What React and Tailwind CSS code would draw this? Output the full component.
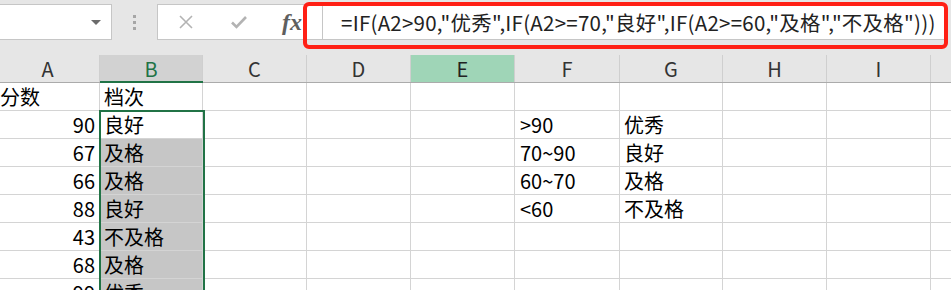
import React from 'react';

const cols = [
  { key: 'A', w: 104 },
  { key: 'B', w: 103 },
  { key: 'C', w: 104 },
  { key: 'D', w: 104 },
  { key: 'E', w: 104 },
  { key: 'F', w: 105 },
  { key: 'G', w: 103 },
  { key: 'H', w: 104 },
  { key: 'I', w: 104 },
  { key: 'J', w: 104 },
];

// row data: A (number, right aligned), B grade, F range, G label
const rows = [
  { a: '分数', aLeft: true, b: '档次' },
  { a: '90', b: '良好', f: '>90', g: '优秀' },
  { a: '67', b: '及格', f: '70~90', g: '良好' },
  { a: '66', b: '及格', f: '60~70', g: '及格' },
  { a: '88', b: '良好', f: '<60', g: '不及格' },
  { a: '43', b: '不及格' },
  { a: '68', b: '及格' },
  { a: '99', b: '优秀' },
];

const font = { fontFamily: '"Noto Sans CJK SC", "Liberation Sans", sans-serif' };

const Cell = ({ w, children, className = '' }) => (
  <div
    className={`h-full shrink-0 border-r border-[#d4d4d4] flex items-end pb-[3px] leading-none overflow-hidden whitespace-nowrap ${className}`}
    style={{ width: w }}
  >
    {children}
  </div>
);

const TopBar = () => (
  <div className="relative h-[55px] bg-[#e6e6e6] flex items-start pt-[4px]">
    {/* name box */}
    <div className="w-[112px] h-[36px] bg-white border border-l-0 border-[#c6c6c6] flex items-center justify-end pr-[10px]">
      <div className="w-0 h-0 border-l-[5px] border-r-[5px] border-t-[5px] border-l-transparent border-r-transparent border-t-[#6b6b6b]" />
    </div>
    {/* dots */}
    <div className="w-[45px] h-[36px] flex flex-col items-center justify-center gap-[3px]">
      <div className="w-[3px] h-[3px] bg-[#a6a6a6]" />
      <div className="w-[3px] h-[3px] bg-[#a6a6a6]" />
      <div className="w-[3px] h-[3px] bg-[#a6a6a6]" />
    </div>
    {/* formula box */}
    <div className="flex-1 mr-[4px] h-[36px] bg-white border border-[#c6c6c6] flex items-center">
      <div className="w-[164px] h-full flex items-center">
        <svg width="16" height="16" viewBox="0 0 16 16" className="ml-[20px]">
          <path d="M2 2 L14 14 M14 2 L2 14" stroke="#b3b3b3" strokeWidth="1.6" fill="none" />
        </svg>
        <svg width="18" height="16" viewBox="0 0 18 16" className="ml-[36px]">
          <path d="M2 8.5 L6.5 13 L16 3" stroke="#b3b3b3" strokeWidth="2.6" fill="none" />
        </svg>
        <span
          className="ml-[34px] text-[24px] italic font-semibold text-[#5f5f5f] leading-none"
          style={{ fontFamily: '"Liberation Serif", serif' }}
        >
          fx
        </span>
      </div>
      <div className="h-full border-l border-[#c6c6c6] flex-1 flex items-center pl-[18px]">
        <span className="text-[20.5px] text-[#222] whitespace-nowrap tracking-[0.25px]" style={font}>
          =IF(A2&gt;90,"优秀",IF(A2&gt;=70,"良好",IF(A2&gt;=60,"及格","不及格")))
        </span>
      </div>
    </div>
    {/* red annotation box */}
    <div className="absolute left-[303px] top-[2px] w-[645px] h-[47px] border-4 border-[#ff2015] rounded-[6px]" />
  </div>
);

const HeaderRow = () => (
  <div className="flex h-[28px] ml-[-4px] bg-[#e6e6e6] border-b border-[#ababab]">
    {cols.map((c) => {
      const selB = c.key === 'B';
      const selE = c.key === 'E';
      return (
        <div
          key={c.key}
          className={`h-full shrink-0 border-r border-[#cfcfcf] flex items-center justify-center text-[20px] ${
            selB ? 'bg-[#d2d2d2] text-[#217346]' : selE ? 'bg-[#9fd5b7] text-[#222]' : 'text-[#333]'
          }`}
          style={{ width: c.w, ...font }}
        >
          {c.key === 'J' ? '' : c.key}
        </div>
      );
    })}
  </div>
);

export default function App() {
  return (
    <div className="w-[951px] h-[290px] overflow-hidden bg-white relative" style={font}>
      <TopBar />
      <HeaderRow />
      <div className="ml-[-4px]">
        {rows.map((r, i) => (
          <div key={i} className="flex h-[28px] border-b border-[#d4d4d4] text-[20px] text-black">
            <Cell w={cols[0].w} className={r.aLeft ? 'justify-start pl-[4px]' : 'justify-end pr-[4px]'}>
              {r.a}
            </Cell>
            <Cell w={cols[1].w} className={`pl-[4px] ${i >= 2 ? 'bg-[#c6c6c6]' : ''}`}>
              {r.b}
            </Cell>
            <Cell w={cols[2].w} />
            <Cell w={cols[3].w} />
            <Cell w={cols[4].w} />
            <Cell w={cols[5].w} className="pl-[5px]">{r.f}</Cell>
            <Cell w={cols[6].w} className="pl-[4px]">{r.g}</Cell>
            <Cell w={cols[7].w} />
            <Cell w={cols[8].w} />
            <Cell w={cols[9].w} />
          </div>
        ))}
      </div>
      {/* selection overlays */}
      <div className="absolute left-[100px] top-[81px] w-[103px] h-[2px] bg-[#217346]" />
      <div className="absolute left-[99px] top-[110px] w-[106px] h-[200px] border-2 border-[#217346]" />
    </div>
  );
}
